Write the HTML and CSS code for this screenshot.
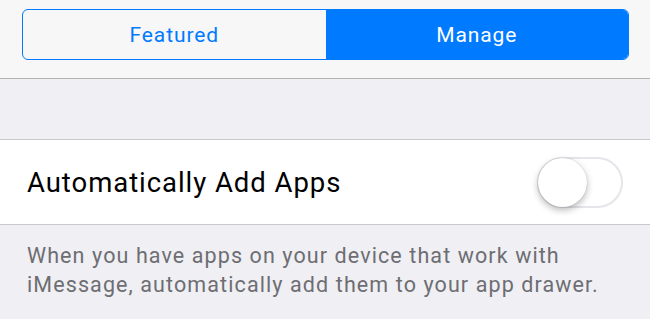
FILE: index.html
```html
<!DOCTYPE html>
<html>
<head>
<meta charset="utf-8">
<link rel="stylesheet" href="styles.css">
</head>
<body>
<div class="topbar">
  <div class="segmented">
    <div class="seg">Featured</div>
    <div class="seg active">Manage</div>
  </div>
</div>
<div class="spacer"></div>
<div class="row">
  <div class="label">Automatically Add Apps</div>
  <div class="switch"><div class="knob"></div></div>
</div>
<div class="footer">When you have apps on your device that work with iMessage, automatically add them to your app drawer.</div>
</body>
</html>
```
FILE: styles.css
```css
* { box-sizing: border-box; }
html, body { margin: 0; padding: 0; }
body {
  width: 650px;
  height: 319px;
  overflow: hidden;
  background: #efeff4;
  font-family: Roboto, "Liberation Sans", sans-serif;
}
.topbar {
  height: 79px;
  background: #f7f7f7;
  border-bottom: 1px solid #b2b2b2;
  padding: 9px 21px 0 22px;
}
.segmented {
  display: flex;
  height: 51px;
  border: 1.5px solid #007aff;
  border-radius: 6px;
  overflow: hidden;
}
.seg {
  flex: 1;
  display: flex;
  align-items: center;
  justify-content: center;
  color: #007aff;
  font-size: 21px;
  letter-spacing: 0.9px;
}
.seg.active {
  background: #007aff;
  color: #fff;
}
.spacer { height: 60px; }
.row {
  height: 86px;
  background: #fff;
  border-top: 1px solid #c8c7cc;
  border-bottom: 1px solid #c8c7cc;
  display: flex;
  align-items: center;
  justify-content: space-between;
  padding: 0 27px 0 27px;
}
.label {
  font-size: 27.5px;
  letter-spacing: 0.95px;
  color: #000;
}
.switch {
  width: 86px;
  height: 51px;
  border-radius: 26px;
  border: 2px solid #e5e5ea;
  background: #fff;
  position: relative;
}
.knob {
  position: absolute;
  left: -1px;
  top: -1px;
  width: 49px;
  height: 49px;
  border-radius: 50%;
  background: #fff;
  box-shadow: 0 3px 7px rgba(0,0,0,0.28), 0 0 1px rgba(0,0,0,0.25);
}
.footer {
  padding: 16px 40px 0 27px;
  font-size: 21.5px;
  letter-spacing: 1.1px;
  line-height: 29px;
  color: #6d6d72;
}
```
